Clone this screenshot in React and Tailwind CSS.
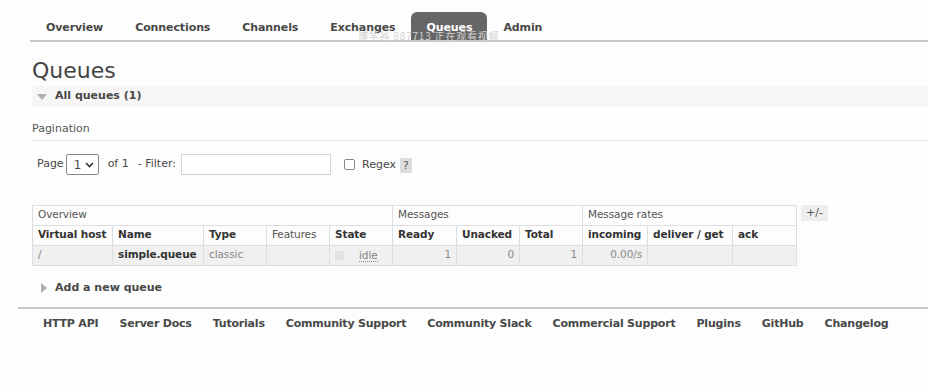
import React from 'react';

const tabs = ['Overview', 'Connections', 'Channels', 'Exchanges', 'Queues', 'Admin'];
const footer = ['HTTP API', 'Server Docs', 'Tutorials', 'Community Support', 'Community Slack', 'Commercial Support', 'Plugins', 'GitHub', 'Changelog'];

const cols = [
  { label: 'Virtual host', w: 80 },
  { label: 'Name', w: 91 },
  { label: 'Type', w: 63 },
  { label: 'Features', w: 63, light: true },
  { label: 'State', w: 63 },
  { label: 'Ready', w: 64 },
  { label: 'Unacked', w: 63 },
  { label: 'Total', w: 63 },
  { label: 'incoming', w: 65 },
  { label: 'deliver / get', w: 85 },
  { label: 'ack', w: 64 },
];

const App = () => {
  return (
    <div className="relative w-[928px] h-[389px] bg-[#fdfdfd] text-[#484848] overflow-hidden" style={{ fontFamily: '"DejaVu Sans", Verdana, sans-serif' }}>
      {/* Nav tabs */}
      <div className="ml-[30px] mt-[12px] flex items-end h-[30px] border-b-2 border-[#c8c8c8] text-[11px] font-bold tracking-[-0.1px]">
        {tabs.map((t) => (
          <div
            key={t}
            className={
              t === 'Queues'
                ? 'h-[28px] pt-[4px] px-[15px] flex items-center rounded-t-[6px] bg-[#666666] text-white'
                : 'h-[28px] pt-[4px] px-[16px] flex items-center text-[#484848]'
            }
          >
            {t}
          </div>
        ))}
      </div>

      {/* watermark */}
      <div className="absolute left-[358px] top-[31px] text-[10px] leading-none text-[#d2d2d2] tracking-[0.8px]" style={{ fontFamily: '"Noto Sans CJK SC", sans-serif' }}>
        博学谷 887713 正在观看视频
      </div>

      <div className="pl-[32px]">
        <h1 className="text-[22px] leading-[26px] mt-[16px] text-[#444]">Queues</h1>

        <div className="mt-[2px] h-[21px] bg-[#f6f6f6] flex items-center pl-[5px] text-[11px] font-bold text-[#484848]">
          <span className="w-0 h-0 border-l-[5px] border-r-[5px] border-t-[6px] border-l-transparent border-r-transparent border-t-[#b0b0b0] mr-[8px]" />
          All queues (1)
        </div>

        <div className="mt-[14px] text-[11px] text-[#555] pb-[2px] border-b border-[#e6e6e6]">Pagination</div>

        <div className="mt-[13px] flex items-center text-[11px] text-[#484848] pl-[5px] h-[22px]">
          <span>Page</span>
          <div className="ml-[2px] w-[33px] h-[21px] border border-[#888] rounded-[2px] flex items-center pl-[7px] bg-white">
            <span className="text-[12px]">1</span>
            <svg width="9" height="6" viewBox="0 0 9 6" className="ml-[4px]">
              <path d="M1 1 L4.5 4.5 L8 1" fill="none" stroke="#333" strokeWidth="1.6" />
            </svg>
          </div>
          <span className="ml-[9px]">of 1</span>
          <span className="ml-[9px]">- Filter:</span>
          <div className="ml-[5px] w-[150px] h-[21px] border border-[#d4d4d4] bg-white" />
          <div className="ml-[13px] w-[11px] h-[11px] border border-[#888] rounded-[2px] bg-white" />
          <span className="ml-[7px] mt-[2px]">Regex</span>
          <span className="ml-[4px] mt-[2px] px-[3px] h-[15px] leading-[15px] bg-[#dddddd] text-[#555]">?</span>
        </div>

        {/* Table */}
        <div className="mt-[29px] flex items-start">
          <table className="border-collapse text-[10.5px] tracking-[-0.1px] table-fixed" style={{ width: 764 }}>
            <colgroup>
              {cols.map((c) => (
                <col key={c.label} style={{ width: c.w }} />
              ))}
            </colgroup>
            <thead>
              <tr className="h-[20px]">
                <th colSpan={5} className="border border-[#dedede] text-left font-normal px-[5px] text-[#555]">Overview</th>
                <th colSpan={3} className="border border-[#dedede] text-left font-normal px-[5px] text-[#555]">Messages</th>
                <th colSpan={3} className="border border-[#dedede] text-left font-normal px-[5px] text-[#555]">Message rates</th>
              </tr>
              <tr className="h-[20px]">
                {cols.map((c) => (
                  <th
                    key={c.label}
                    className={`border border-[#dedede] text-left px-[5px] whitespace-nowrap ${c.light ? 'font-normal text-[#555]' : 'font-bold text-[#333]'}`}
                  >
                    {c.label}
                  </th>
                ))}
              </tr>
            </thead>
            <tbody>
              <tr className="h-[20px] bg-[#f0f0f0]">
                <td className="border border-[#dedede] px-[5px] text-[#888]">/</td>
                <td className="border border-[#dedede] px-[5px] font-bold text-[#333]">simple.queue</td>
                <td className="border border-[#dedede] px-[5px] text-[#888]">classic</td>
                <td className="border border-[#dedede] px-[5px]"></td>
                <td className="border border-[#dedede] px-[5px]">
                  <div className="flex items-center">
                    <span className="w-[9px] h-[9px] bg-[#e2e2e2] inline-block" />
                    <span className="ml-[15px] text-[#888] border-b border-dotted border-[#888] leading-[12px]">idle</span>
                  </div>
                </td>
                <td className="border border-[#dedede] px-[5px] text-right text-[#888]">1</td>
                <td className="border border-[#dedede] px-[5px] text-right text-[#888]">0</td>
                <td className="border border-[#dedede] px-[5px] text-right text-[#888]">1</td>
                <td className="border border-[#dedede] px-[5px] text-right text-[#888]">0.00/s</td>
                <td className="border border-[#dedede] px-[5px]"></td>
                <td className="border border-[#dedede] px-[5px]"></td>
              </tr>
            </tbody>
          </table>
          <div className="ml-[4px] h-[16px] px-[5px] bg-[#eeeeee] text-[11px] leading-[16px] text-[#555]">+/-</div>
        </div>

        <div className="mt-[14px] flex items-center text-[11px] font-bold text-[#484848] pl-[9px]">
          <span className="w-0 h-0 border-t-[5px] border-b-[5px] border-l-[6px] border-t-transparent border-b-transparent border-l-[#b0b0b0] mr-[8px]" />
          Add a new queue
        </div>
      </div>

      {/* Footer */}
      <div className="ml-[18px] mt-[11px] border-t-2 border-[#c8c8c8] pt-[7px] pl-[25px] flex gap-[21px] text-[11px] font-bold text-[#484848] tracking-[-0.2px]">
        {footer.map((f) => (
          <span key={f}>{f}</span>
        ))}
      </div>
    </div>
  );
};

export default App;
